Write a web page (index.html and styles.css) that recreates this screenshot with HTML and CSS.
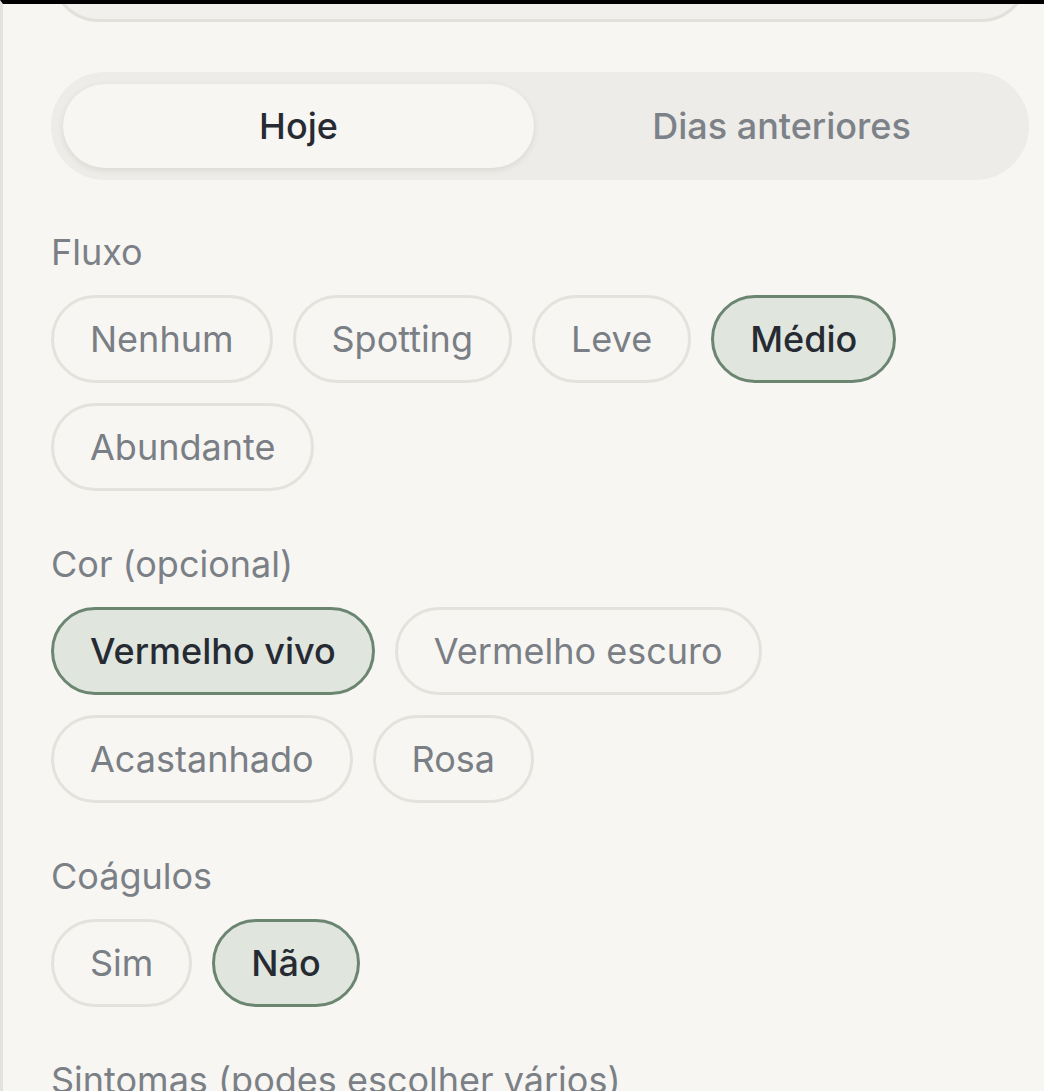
FILE: index.html
```html
<!DOCTYPE html>
<html lang="pt">
<head>
<meta charset="utf-8">
<title>Registo</title>
<link rel="stylesheet" href="styles.css">
</head>
<body>
<div class="frame">
  <div class="content">
    <div class="card-top"></div>

    <div class="segmented">
      <button class="seg seg-active">Hoje</button>
      <button class="seg">Dias anteriores</button>
    </div>

    <section class="section section-first">
      <div class="label">Fluxo</div>
      <div class="chips">
        <span class="chip">Nenhum</span>
        <span class="chip">Spotting</span>
        <span class="chip">Leve</span>
        <span class="chip chip-on">Médio</span>
        <span class="chip">Abundante</span>
      </div>
    </section>

    <section class="section">
      <div class="label">Cor (opcional)</div>
      <div class="chips">
        <span class="chip chip-on">Vermelho vivo</span>
        <span class="chip">Vermelho escuro</span>
        <span class="chip">Acastanhado</span>
        <span class="chip">Rosa</span>
      </div>
    </section>

    <section class="section">
      <div class="label">Coágulos</div>
      <div class="chips">
        <span class="chip">Sim</span>
        <span class="chip chip-on">Não</span>
      </div>
    </section>

    <section class="section">
      <div class="label">Sintomas (podes escolher vários)</div>
    </section>
  </div>
</div>
</body>
</html>
```

FILE: styles.css
```css
html, body {
  margin: 0;
  padding: 0;
  background: #f7f6f2;
}

body {
  font-family: Inter, "Noto Sans", sans-serif;
  -webkit-font-smoothing: antialiased;
}

.frame {
  height: 1091px;
  box-sizing: border-box;
  border-top: 4px solid #000;
  border-left: 3px solid #e4e2dd;
  background: #f7f6f2;
  overflow: hidden;
}

.content {
  padding: 0 15px 0 48px;
}

.card-top {
  height: 200px;
  margin-top: -182px;
  box-sizing: border-box;
  background: #f1f0ec;
  border: 3px solid #e2e0db;
  border-radius: 48px;
}

.segmented {
  margin-top: 50px;
  height: 108px;
  box-sizing: border-box;
  padding: 12px;
  background: #edece8;
  border-radius: 999px;
  display: grid;
  grid-template-columns: 1fr 1fr;
  gap: 12px;
}

.seg {
  border: none;
  margin: 0;
  padding: 0;
  background: transparent;
  border-radius: 999px;
  font-family: inherit;
  font-size: 36px;
  font-weight: 500;
  color: #7d8188;
  cursor: pointer;
}

.seg-active {
  background: #f7f6f2;
  color: #262b33;
  box-shadow: 0 2px 6px rgba(40, 35, 25, 0.10);
}

.section {
  margin-top: 48px;
}

.section-first {
  margin-top: 47px;
}

.label {
  font-size: 36px;
  line-height: 50px;
  color: #7b7f86;
  margin-bottom: 18px;
}

.chips {
  display: flex;
  flex-wrap: wrap;
  gap: 20px;
}

.chip {
  height: 88px;
  box-sizing: border-box;
  padding: 0 36px;
  display: inline-flex;
  align-items: center;
  border: 3px solid #e4e2dd;
  border-radius: 999px;
  font-size: 36px;
  color: #7a7e85;
  background: transparent;
}

.chip-on {
  background: #e0e5de;
  border-color: #6b8571;
  color: #262b33;
  font-weight: 500;
}
```
